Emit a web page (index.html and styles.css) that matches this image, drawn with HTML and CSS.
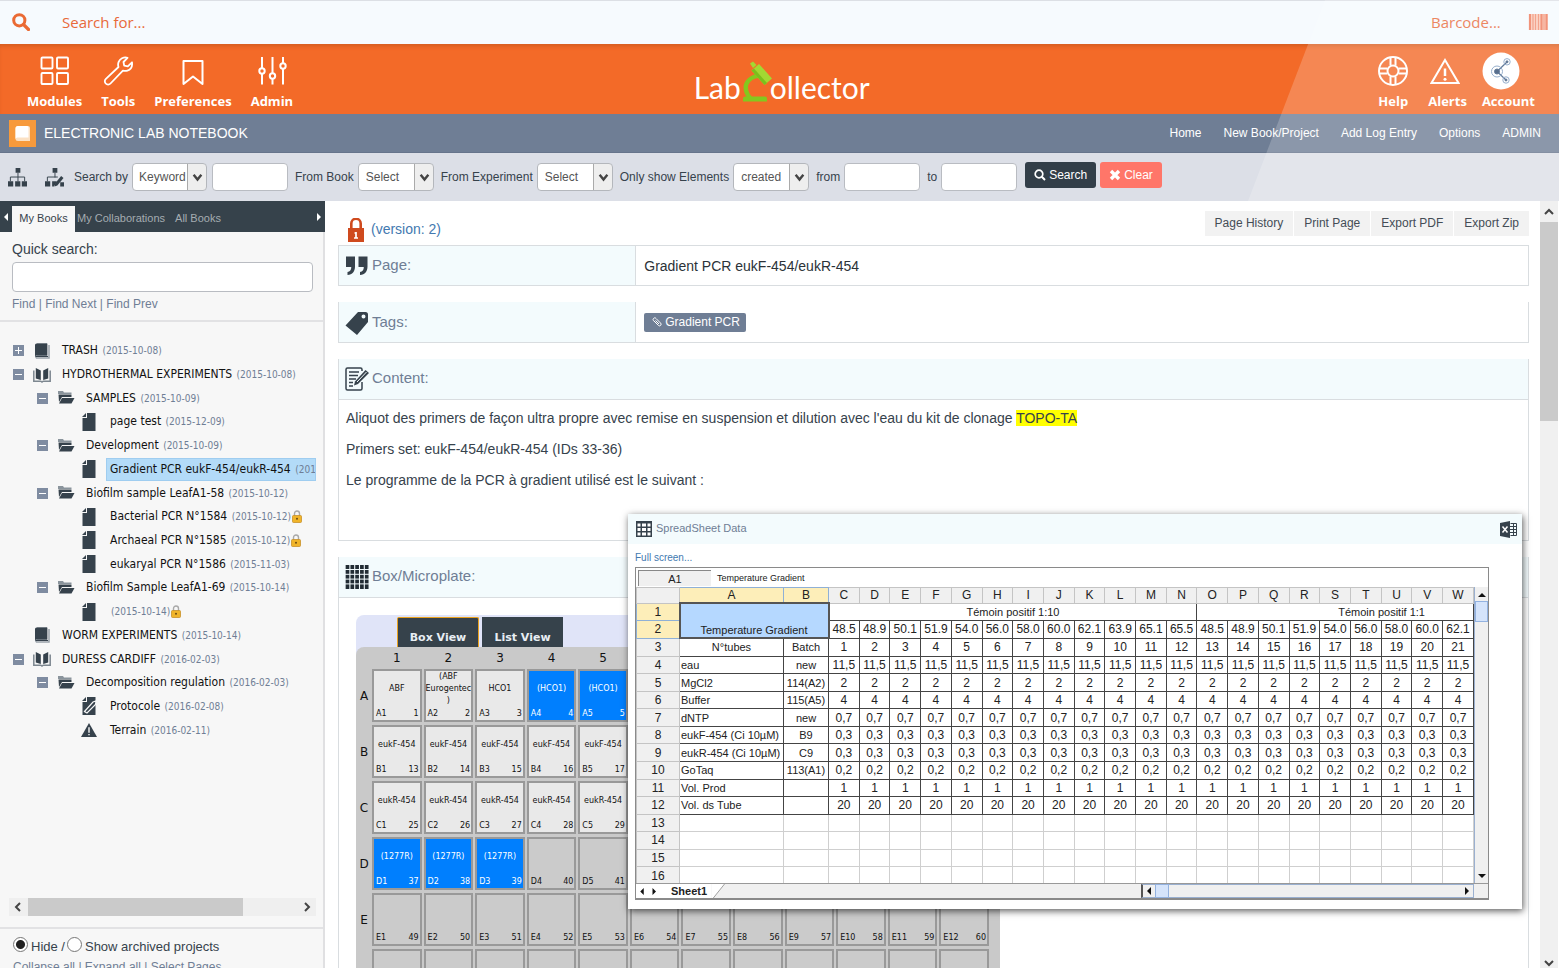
FILE: index.html
```html
<!DOCTYPE html>
<html lang="en">
<head>
<meta charset="utf-8">
<title>LabCollector - Electronic Lab Notebook</title>
<link rel="stylesheet" href="styles.css">
</head>
<body>
<svg class="defs" aria-hidden="true">
  <symbol id="i-book" viewBox="0 0 16 16"><path d="M3 0h9.500v12.500H2.500A1.500 1.500 0 0 0 2.500 15H15V2" fill="none" stroke="#9aa3ab" stroke-width="1.500"/><path d="M2.500 .5h10a.8.8 0 0 1 .8.800V12.500H3.500A2 2 0 0 0 1 14V2A1.500 1.500 0 0 1 2.500 .5z" fill="#36424c"/><path d="M1.500 13.500h12.500" stroke="#36424c"/></symbol>
  <symbol id="i-open" viewBox="0 0 18 16"><path d="M.8 3.500v10.700h7l1.200.8 1.200-.8h7V3.500" fill="none" stroke="#7d8790" stroke-width="1.500"/><path d="M2.800 1 7.800 3.500v9.500L2.800 11.500zM15.200 1 10.200 3.500v9.500l5-1.500z" fill="#36424c"/></symbol>
  <symbol id="i-folder" viewBox="0 0 18 14"><path d="M1 0h5l1 1.500h7.500V3H1z" fill="#8a949c"/><path d="M1.500 3.500h13V6H5L2 11z" fill="#36424c"/><path d="M5 7h12.500l-3 5.500H2z" fill="#36424c"/></symbol>
  <symbol id="i-page" viewBox="0 0 16 18"><path d="M6 0h8.500v18h-13V5H6z" fill="#36424c"/><path d="M1 4 5 0v4z" fill="#36424c"/></symbol>
  <symbol id="i-proto" viewBox="0 0 16 18"><path d="M6 0h8.500v18h-13V5H6z" fill="#36424c"/><path d="M1 4 5 0v4z" fill="#36424c"/><path d="M3.500 14.500 12 5l3-1-.5 3.500L6 16z" fill="#36424c" stroke="#f7f7f7" stroke-width="1.200"/></symbol>
  <symbol id="i-warn" viewBox="0 0 18 16"><path d="M9 0l9 16H0z" fill="#36424c"/><path d="M9 5v6M9 12.500v1.500" stroke="#f7f7f7" stroke-width="1.600"/></symbol>
  <symbol id="i-lock" viewBox="0 0 10 13"><path d="M2.500 6V3.500a2.500 2.500 0 0 1 5 0V6" fill="none" stroke="#a9a9a9" stroke-width="1.400"/><rect x=".5" y="5.500" width="9" height="7" rx="1" fill="#f0b429" stroke="#c8912a" stroke-width=".8"/><circle cx="5" cy="8.700" r="1" fill="#6b4a10"/></symbol>
  <symbol id="i-chev" viewBox="0 0 10 10"><path d="M1.500 2.500 5 6.800l3.500-4.300" fill="none" stroke="#444" stroke-width="2.200"/></symbol>
</svg>

<header class="top">
  <form class="searchbar">
    <svg class="ic-search" viewBox="0 0 18 18"><circle cx="7.300" cy="7.300" r="5.600" fill="none" stroke="#ea6a34" stroke-width="3"/><path d="M11.500 11.500 16.500 16.500" stroke="#ea6a34" stroke-width="3.200" stroke-linecap="round"/></svg>
    <input class="search-for" type="text" placeholder="Search for..." aria-label="Search for">
    <input class="barcode" type="text" placeholder="Barcode..." aria-label="Barcode">
    <svg class="ic-bar" viewBox="0 0 20 16"><path d="M1 0h19v16H1z" fill="#fbd0c0"/><path d="M2 0v16M13.500 0v16M18.500 0v16" stroke="#ee7a5a" stroke-width="2.200"/><path d="M5 0v16M7.500 0v16M10.500 0v16M16 0v16" stroke="#f08d70" stroke-width="1.300"/></svg>
  </form>

  <nav class="modules">
    <a href="#"><svg viewBox="0 0 30 30"><g fill="none" stroke="#fff" stroke-width="1.900"><rect x="1.500" y="1.500" width="11" height="11" rx="1"/><rect x="17" y="1.500" width="11" height="11" rx="1"/><rect x="1.500" y="17" width="11" height="11" rx="1"/><rect x="17" y="17" width="11" height="11" rx="1"/></g></svg>Modules</a>
    <a href="#"><svg viewBox="0 0 30 30"><path d="M19 2.200c2-.9 4.300-.9 5.500-.3L20.500 6l.7 3.700 3.600.6 4.200-4c.5 4-1 7.300-4.600 8.300-1.600.5-3.200.3-4.500 0L7.500 27.500a3.300 3.300 0 0 1-4.800 0 3.300 3.300 0 0 1 .2-4.700L15.500 11c-1.200-3.500.5-7.300 3.500-8.800z" fill="none" stroke="#fff" stroke-width="1.800" stroke-linejoin="round"/></svg>Tools</a>
    <a href="#"><svg viewBox="0 0 30 30"><path d="M5.500 5h19v23L15 20.500 5.500 28z" fill="none" stroke="#fff" stroke-width="2" stroke-linejoin="round"/></svg>Preferences</a>
    <a href="#"><svg viewBox="0 0 30 30"><g fill="none" stroke="#fff" stroke-width="2"><path d="M5 1v11M5 18v10.500M15.500 1v16M15.500 23v5.500M26 1v6M26 13v15.500"/><circle cx="5" cy="15" r="2.700"/><circle cx="15.500" cy="20" r="2.700"/><circle cx="26" cy="10" r="2.700"/></g></svg>Admin</a>
    <div class="logo"><span>Lab</span><svg viewBox="0 0 30 42"><path d="M17 12.500C7.500 13.500 1.500 20 1.500 26.500c0 4.500 2 8 4.500 11.500h6C8.500 34.500 6 31 6 26.500c0-4.500 4-9 11-9.500z" fill="#84c81e"/><path d="M1 37.500q0-2 2-2h20q2 0 2 2v3H1z" fill="#84c81e"/><path d="M9.500 9.500 17 3l13 14.500-7.500 6.500z" fill="#a3d832"/><path d="M9.500 9.500l2.500-2L25 22l-2.500 2z" fill="#7cbf1c"/><path d="M8 2.500 11 .5l3.500 3.500L11 7z" fill="#a3d832"/></svg><span>ollector</span></div>
    <div class="user">
      <a href="#"><svg viewBox="0 0 30 30"><g fill="none" stroke="#fff" stroke-width="2"><circle cx="15" cy="15" r="14"/><circle cx="15" cy="15" r="5.500"/><path d="M12.500 1.500v8M17.500 1.500v8M12.500 20.500v8M17.500 20.500v8M1.500 12.500h8M1.500 17.500h8M20.500 12.500h8M20.500 17.500h8"/></g></svg>Help</a>
      <a href="#" class="alerts"><svg viewBox="0 0 30 30"><path d="M15 4 28.500 27h-27z" fill="none" stroke="#fff" stroke-width="2"/><path d="M15 12.500v7.500" stroke="#fff" stroke-width="2.500"/><circle cx="15" cy="23.200" r="1.500" fill="#fff"/></svg>Alerts</a>
      <a href="#" class="account"><svg viewBox="0 0 38 38"><circle cx="19" cy="19" r="18.500" fill="#fff"/><g stroke="#3d5a80" fill="#2f4a70"><path d="M15 19.500 25 10M15 19.500 24 28" stroke-width="1.200"/><circle cx="15" cy="19.500" r="2.500"/><circle cx="25" cy="9.800" r="1"/><circle cx="24" cy="28" r="1"/></g><g fill="none" stroke="#7e9cc0"><circle cx="15" cy="19.500" r="5.500"/><circle cx="25" cy="9.800" r="3.200"/><circle cx="24" cy="28" r="3.200"/></g></svg>Account</a>
    </div>
  </nav>

  <div class="titlebar">
    <svg class="nb" viewBox="0 0 27 27"><rect width="27" height="27" fill="#f79a3c"/><path d="M9 6h10a2 2 0 0 1 2 2v13H9a2.500 2.500 0 0 1-2.500-2.500V8.500A2.500 2.500 0 0 1 9 6z" fill="#fbe1c4"/><path d="M9 6h9a1.500 1.500 0 0 1 1.500 1.500V17.500h-11a2 2 0 0 0-2 1.500V8.500A2.500 2.500 0 0 1 9 6z" fill="#fff"/></svg>
    <h1>ELECTRONIC LAB NOTEBOOK</h1>
    <nav><a href="#">Home</a><a href="#">New Book/Project</a><a href="#">Add Log Entry</a><a href="#">Options</a><a href="#">ADMIN</a></nav>
  </div>

  <form class="filters">
    <svg class="org" viewBox="0 0 20 20"><path d="M8 0h5v5H8zM0 14h5.500v5.500H0zM7.500 14H13v5.500H7.500zM14.500 14H20v5.500h-5.500z" fill="#36424c"/><path d="M10.500 5v9M2.500 14V9.500h15V14" fill="none" stroke="#36424c"/></svg>
    <svg class="org org2" viewBox="0 0 20 20"><path d="M8 0h5v5H8zM0 14h5.500v5.500H0zM7.500 14l5 0-3 5.500h-2z" fill="#36424c"/><path d="M10.500 5v5M2.500 14V9.500h11" fill="none" stroke="#36424c"/><path d="M10 19.500l.8-3.500L17 8.500l2.500 2L13 18.500z" fill="#36424c"/><path d="M16 15h4v4.500h-4z" fill="#36424c"/></svg>
    <label for="f-key">Search by</label>
    <span class="select"><select id="f-key"><option>Keyword</option></select><svg><use href="#i-chev"/></svg></span>
    <input class="box key" type="text" aria-label="Keyword value">
    <label for="f-book">From Book</label>
    <span class="select wide"><select id="f-book"><option>Select</option></select><svg><use href="#i-chev"/></svg></span>
    <label for="f-exp">From Experiment</label>
    <span class="select wide"><select id="f-exp"><option>Select</option></select><svg><use href="#i-chev"/></svg></span>
    <label for="f-el">Only show Elements</label>
    <span class="select wide"><select id="f-el"><option>created</option></select><svg><use href="#i-chev"/></svg></span>
    <label for="f-from">from</label>
    <input class="box from" id="f-from" type="text">
    <label for="f-to">to</label>
    <input class="box to" id="f-to" type="text">
    <button type="button" class="btn dark"><svg viewBox="0 0 12 12"><circle cx="5" cy="5" r="3.800" fill="none" stroke="#fff" stroke-width="1.700"/><path d="M7.800 7.800 11 11" stroke="#fff" stroke-width="2"/></svg>Search</button>
    <button type="button" class="btn red"><svg viewBox="0 0 12 12"><path d="M2 2l8 8M10 2l-8 8" stroke="#fff" stroke-width="3.400"/></svg>Clear</button>
  </form>
  <div class="shine"></div>
</header>

<div class="work">
  <aside class="side">
    <div class="tabs">
      <button class="arrow" aria-label="Previous tab"><svg viewBox="0 0 4 8"><path d="M4 0v8L0 4z" fill="#fff"/></svg></button>
      <button class="tab on">My Books</button>
      <button class="tab">My Collaborations</button>
      <button class="tab last">All Books</button>
      <button class="arrow end" aria-label="Next tab"><svg viewBox="0 0 4 8"><path d="M0 0v8l4-4z" fill="#fff"/></svg></button>
    </div>
    <div class="quick">
      <label for="quick">Quick search:</label>
      <input class="box" id="quick" type="text">
      <p><a href="#">Find</a> | <a href="#">Find Next</a> | <a href="#">Find Prev</a></p>
    </div>
    <div class="tree-area">
      <ul class="tree">
        <li><button class="tog plus" aria-label="Expand"></button><svg><use href="#i-book"/></svg><a href="#">TRASH <small>(2015-10-08)</small></a></li>
        <li><button class="tog" aria-label="Collapse"></button><svg><use href="#i-open"/></svg><a href="#">HYDROTHERMAL EXPERIMENTS <small>(2015-10-08)</small></a></li>
        <li class="l1"><button class="tog" aria-label="Collapse"></button><svg><use href="#i-folder"/></svg><a href="#">SAMPLES <small>(2015-10-09)</small></a></li>
        <li class="l2"><svg><use href="#i-page"/></svg><a href="#">page test <small>(2015-12-09)</small></a></li>
        <li class="l1"><button class="tog" aria-label="Collapse"></button><svg><use href="#i-folder"/></svg><a href="#">Development <small>(2015-10-09)</small></a></li>
        <li class="l2 sel"><svg><use href="#i-page"/></svg><a href="#">Gradient PCR eukF-454/eukR-454 <small>(201</small></a></li>
        <li class="l1"><button class="tog" aria-label="Collapse"></button><svg><use href="#i-folder"/></svg><a href="#">Biofilm sample LeafA1-58 <small>(2015-10-12)</small></a></li>
        <li class="l2"><svg><use href="#i-page"/></svg><a href="#">Bacterial PCR N°1584 <small>(2015-10-12)</small></a><svg class="lock"><use href="#i-lock"/></svg></li>
        <li class="l2"><svg><use href="#i-page"/></svg><a href="#">Archaeal PCR N°1585 <small>(2015-10-12)</small></a><svg class="lock"><use href="#i-lock"/></svg></li>
        <li class="l2"><svg><use href="#i-page"/></svg><a href="#">eukaryal PCR N°1586 <small>(2015-11-03)</small></a></li>
        <li class="l1"><button class="tog" aria-label="Collapse"></button><svg><use href="#i-folder"/></svg><a href="#">Biofilm Sample LeafA1-69 <small>(2015-10-14)</small></a></li>
        <li class="l2"><svg><use href="#i-page"/></svg><a href="#"><small>(2015-10-14)</small></a><svg class="lock"><use href="#i-lock"/></svg></li>
        <li><svg><use href="#i-book"/></svg><a href="#">WORM EXPERIMENTS <small>(2015-10-14)</small></a></li>
        <li><button class="tog" aria-label="Collapse"></button><svg><use href="#i-open"/></svg><a href="#">DURESS CARDIFF <small>(2016-02-03)</small></a></li>
        <li class="l1"><button class="tog" aria-label="Collapse"></button><svg><use href="#i-folder"/></svg><a href="#">Decomposition regulation <small>(2016-02-03)</small></a></li>
        <li class="l2"><svg><use href="#i-proto"/></svg><a href="#">Protocole <small>(2016-02-08)</small></a></li>
        <li class="l2"><svg><use href="#i-warn"/></svg><a href="#">Terrain <small>(2016-02-11)</small></a></li>
      </ul>
      <div class="hbar">
        <svg viewBox="0 0 10 10"><path d="M7 1 3 5l4 4" fill="none" stroke="#444" stroke-width="2"/></svg>
        <span class="track"><span class="thumb"></span></span>
        <svg viewBox="0 0 10 10"><path d="M3 1l4 4-4 4" fill="none" stroke="#444" stroke-width="2"/></svg>
      </div>
    </div>
    <div class="side-foot">
      <div class="radios"><input type="radio" name="arch" id="hide" checked><label for="hide">Hide /</label><input type="radio" name="arch" id="show"><label for="show">Show archived projects</label></div>
      <p><a href="#">Collapse all</a> | <a href="#">Expand all</a> | <a href="#">Select Pages</a></p>
    </div>
  </aside>

  <main class="main">
    <div class="doc">
      <div class="docbar">
        <svg class="redlock" viewBox="0 0 16 24"><path d="M3.300 11V5.500a4.700 4.700 0 0 1 9.400 0V11" fill="none" stroke="#cf4a1e" stroke-width="2.600"/><path d="M0 10h16v14H0z" fill="#cf4a1e"/><path d="M8 14v6M6.500 15h2M6 20h4" stroke="#fff" stroke-width="1.700"/></svg>
        <a class="version" href="#">(version: 2)</a>
        <div class="actions"><button>Page History</button><button>Print Page</button><button>Export PDF</button><button>Export Zip</button></div>
      </div>

      <section class="panel row first">
        <h2><svg viewBox="0 0 24 24"><path d="M1 2.500h9v10c0 5-2.500 8-7.500 8.500v-3c2.500-.5 3.800-2 3.800-5H1zM13.500 2.500h9v10c0 5-2.500 8-7.500 8.500v-3c2.500-.5 3.800-2 3.800-5h-5.300z" fill="#36424c"/></svg>Page:</h2>
        <div class="val">Gradient PCR eukF-454/eukR-454</div>
      </section>

      <section class="panel row">
        <h2><svg viewBox="0 0 24 24"><path fill-rule="evenodd" d="M13 1h7.500A2.500 2.500 0 0 1 23 3.500V11L12 24 .5 14.500zM18.500 3.500a2 2 0 1 0 .01 4 2 2 0 0 0-.01-4z" fill="#36424c"/></svg>Tags:</h2>
        <div class="val"><a class="tag" href="#"><svg viewBox="0 0 10 10"><path d="M1.500 1.500a1.500 1.500 0 0 1 2.500 0L8.500 6a1.500 1.500 0 0 1-2 2.500L2 4a1.500 1.500 0 0 1-.5-2.500zM3.500 3.500 7 7" fill="none" stroke="#fff"/></svg>Gradient PCR</a></div>
      </section>

      <section class="panel">
        <h2><svg viewBox="0 0 24 24"><path d="M17 15v6.500a1.500 1.500 0 0 1-1.500 1.500h-13A1.500 1.500 0 0 1 1 21.500v-19A1.500 1.500 0 0 1 2.500 1h13A1.500 1.500 0 0 1 17 2.500V4" fill="none" stroke="#36424c" stroke-width="1.500"/><path d="M4 5h10M4 8.500h9M4 12h7M4 15.500h4M4 19h4" stroke="#36424c" stroke-width="1.500"/><path d="M9 18.500 10 14.500 20.500 3l3.500 3L13 17z" fill="#36424c"/><path d="M12 15 21.500 5" stroke="#f3fbfd"/></svg>Content:</h2>
        <div class="text">
          <p>Aliquot des primers de façon ultra propre avec remise en suspension et dilution avec l'eau du kit de clonage <mark>TOPO-TA</mark></p>
          <p>Primers set: eukF-454/eukR-454 (IDs 33-36)</p>
          <p>Le programme de la PCR à gradient utilisé est le suivant :</p>
        </div>
      </section>

      <section class="panel">
        <h2><svg viewBox="0 0 24 24"><path d="M2.500 0v24M7.300 0v24M12.100 0v24M16.900 0v24M21.700 0v24" stroke="#222c34" stroke-width="3.700"/><path d="M0 4.500h24M0 9.300h24M0 14.100h24M0 18.900h24" stroke="#f3fbfd"/></svg>Box/Microplate:</h2>
        <div class="plate-wrap">
          <div class="plate-tabs"><button class="on">Box View</button><button>List View</button></div>
          <div class="plate"><table id="plate"></table></div>
        </div>
      </section>
    </div>

    <div class="vbar">
      <svg viewBox="0 0 10 10"><path d="M1 7l4-4 4 4" fill="none" stroke="#444" stroke-width="2"/></svg>
      <span class="track"><span class="thumb"></span></span>
      <svg viewBox="0 0 10 10"><path d="M1 3l4 4 4-4" fill="none" stroke="#444" stroke-width="2"/></svg>
    </div>

    <section class="popup">
      <header>
        <svg viewBox="0 0 16 16"><path d="M0 0h16v16H0z" fill="#36424c"/><path d="M1.500 2.500h3v3h-3zM6 2.500h4v3H6zM11.500 2.500h3v3h-3zM1.500 7h3v3h-3zM6 7h4v3H6zM11.500 7h3v3h-3zM1.500 11.500h3v3h-3zM6 11.500h4v3H6zM11.500 11.500h3v3h-3z" fill="#fff"/></svg>
        <h3>SpreadSheet Data</h3>
        <button aria-label="Export to Excel"><svg viewBox="0 0 17 17"><path d="M0 2 10 0v17L0 15z" fill="#36424c"/><path d="M10.500 2.500h6v12h-6M10 5.500h6M10 8.500h6M10 11.500h6M13.500 2.500v12" fill="none" stroke="#36424c"/><path d="M2.500 5.500l5 6M7.500 5.500l-5 6" stroke="#fff" stroke-width="1.500"/></svg></button>
      </header>
      <a class="full" href="#">Full screen...</a>
      <div class="sheet">
        <div class="fx"><span class="ref">A1</span><span class="formula">Temperature Gradient</span></div>
        <div class="grid">
          <div class="cells"><table id="sheet"></table></div>
          <div class="sv"><span class="up"></span><span class="knob"></span><span class="down"></span></div>
        </div>
        <div class="sheet-foot">
          <span class="nav"><svg viewBox="0 0 20 8"><path d="M4 0v8L0 4zM14 0v8l4-4z" fill="#111"/></svg></span>
          <button class="stab">Sheet1</button>
          <svg class="slant" viewBox="0 0 14 15"><path d="M0 0h14L2 15H0z" fill="#fff"/><path d="M14 0 2 15" stroke="#999"/></svg>
          <span class="fill"></span>
          <span class="sh"><svg viewBox="0 0 4 8"><path d="M4 0v8L0 4z" fill="#111"/></svg><span class="knob"></span><svg class="r" viewBox="0 0 4 8"><path d="M0 0v8l4-4z" fill="#111"/></svg></span>
        </div>
      </div>
    </section>
  </main>
</div>
<script src="app.js"></script>
</body>
</html>
```
FILE: styles.css
```css
* { box-sizing: border-box; }
html, body { height: 100%; }
body { margin: 0; display: flex; flex-direction: column; overflow: hidden; font: 14px/18px "Liberation Sans", Arial, sans-serif; color: #36424c; background: #fff; }
a { color: inherit; text-decoration: none; }
button, input, select { font: inherit; color: inherit; margin: 0; }
button { border: 0; padding: 0; background: none; cursor: pointer; }
h1, h2, h3, p, ul { margin: 0; padding: 0; font-weight: normal; }
.defs { position: absolute; width: 0; height: 0; }

/* top bars */
.top { position: relative; flex: none; }
.shine { position: absolute; top: 0; right: 0; bottom: 0; width: 311px; background: rgba(255,255,255,.2); clip-path: polygon(77px 0, 100% 0, 100% 100%, 0 100%); pointer-events: none; }
.searchbar { display: flex; align-items: center; height: 44px; padding: 0 11px 2px 12px; background: #f6fafe; border-top: 1px solid #dcdfe5; }
.searchbar input { border: 0; background: none; outline: 0; padding: 0; font: 15px/20px "Open Sans", sans-serif; }
.searchbar input::placeholder { color: #e8693a; opacity: 1; }
.ic-search { width: 18px; height: 18px; }
.search-for { flex: 1; margin-left: 32px; }
.barcode { width: 97px; }
.ic-bar { width: 20px; height: 16px; }
.modules { display: flex; gap: 19px; height: 70px; padding: 8px 24px 0 27px; background: #f36a28; color: #fff; box-shadow: inset 0 4px 4px -2px rgba(160,70,20,.4); font: bold 13px/18px "Open Sans", sans-serif; }
.modules a { display: flex; flex-direction: column; align-items: center; gap: 3px; }
.modules a svg { width: 30px; height: 30px; margin: 4px 0 3px; }
.modules .account svg { width: 38px; height: 38px; margin: 0 15px -1px 0; }
.modules .alerts svg { margin-right: 6px; }
.logo { flex: 1; display: flex; justify-content: center; align-items: flex-start; padding: 8px 108px 0 0; font: 30px/54px Lato, sans-serif; }
.logo svg { width: 30px; height: 42px; margin: 1px -2px 0 1px; }
.user { display: flex; gap: 15px; }
.user a:first-child { margin-right: 5px; }
.titlebar { display: flex; align-items: center; height: 39px; padding: 0 18px 0 9px; background: #6f7e95; border-bottom: 1px solid #66748b; color: #fff; }
.titlebar h1 { font-size: 14px; line-height: 18px; }
.nb { width: 27px; height: 27px; margin-right: 8px; }
.titlebar nav { display: flex; gap: 22px; margin-left: auto; font-size: 12px; }

.filters { display: flex; align-items: center; height: 48px; padding: 0 8px; background: #dcdfe7; font-size: 12px; }
.filters label { margin: 0 4px 0 7px; white-space: nowrap; }
.org { width: 19px; height: 19px; }
.org2 { margin: 0 3px 0 18px; }
.box { height: 28px; border: 1px solid #b9bcc2; border-radius: 4px; background: #fff; padding: 0 6px; outline: 0; }
.filters .box { width: 76px; }
.key { margin-left: 5px; }
.filters .to { margin-right: 8px; }
.select { position: relative; display: flex; width: 75px; }
.select.wide { width: 76px; }
.select select { appearance: none; width: 100%; height: 28px; padding: 0 20px 0 6px; border: 1px solid #b4b7bc; border-radius: 4px; background: linear-gradient(90deg, #aaa 1px, #eee 1px) right / 19px 100% no-repeat #fff; outline: 0; color: #555; }
.select svg { position: absolute; right: 4px; top: 9px; width: 11px; height: 11px; pointer-events: none; }
.select.wide select { padding-left: 7px; }
.btn { display: flex; align-items: center; gap: 3px; height: 26px; margin-top: -5px; padding: 0 9px; border-radius: 3px; color: #fff; }
.btn svg { width: 12px; height: 12px; }
.dark { background: #323e48; margin-right: 4px; }
.red { background: #ff7669; }

/* sidebar */
.work { flex: 1; min-height: 0; display: flex; }
.side { flex: none; width: 325px; display: flex; flex-direction: column; background: #f7f7f7; border-right: 2px solid #e0e0e2; }
.tabs { display: flex; align-items: flex-end; height: 31px; margin-right: -2px; background: #36424b; color: #a5acb1; font-size: 11px; }
.tab { height: 26px; padding: 0 2px 2px; white-space: nowrap; }
.tab.on { width: 63px; background: #f7f7f7; color: #36424b; }
.tab.last { margin-left: 6px; }
.arrow { display: flex; align-items: center; justify-content: center; width: 12px; height: 31px; }
.arrow svg { width: 4px; height: 8px; }
.arrow.end { margin-left: auto; }
.quick { height: 90px; padding: 8px 10px 0 12px; border-bottom: 2px solid #e2e2e4; }
.quick label { display: block; }
.quick .box { display: block; width: 100%; height: 30px; margin: 4px 0 3px; }
.quick p, .side-foot p { font-size: 12px; color: #6f7e95; }
.tree-area { flex: 1; min-height: 0; display: flex; flex-direction: column; justify-content: space-between; padding: 17px 7px 11px 9px; overflow: hidden; }
.tree { list-style: none; display: grid; grid-auto-rows: 1fr; height: 403px; overflow: hidden; font: 12px/22px "DejaVu Sans Condensed", "DejaVu Sans", sans-serif; color: #111; }
.tree li { position: relative; display: grid; grid-template-columns: 20px 25px auto 1fr; align-items: center; padding-left: 4px; white-space: nowrap; }
.tree .l1 { padding-left: 28px; }
.tree .l2 { padding-left: 52px; }
.tree svg { grid-column: 2; width: 18px; height: 16px; }
.tree .l2 svg { height: 18px; width: 16px; }
.tree a { grid-column: 3; padding: 0 4px; }
.tree .sel { grid-template-columns: 20px 25px 1fr; }
.tree .sel a { background: #b3dbf8; outline: 1px solid #9fcdf0; outline-offset: -1px; padding-right: 0; }
.tree small { margin-left: 1px; font-size: 10px; color: #6f7e95; }
.tree li .lock { grid-column: 4; width: 10px; height: 13px; margin-left: -3px; }
.tog { width: 11px; height: 11px; background: linear-gradient(#fff, #fff) center / 7px 1px no-repeat #7f8ca1; }
.tog.plus { background: linear-gradient(#fff, #fff) center / 7px 1px no-repeat, linear-gradient(#fff, #fff) center / 1px 7px no-repeat #7f8ca1; }
.hbar { display: flex; align-items: center; gap: 5px; height: 18px; padding: 0 4px; background: #efefef; }
.hbar svg, .vbar svg { flex: none; width: 10px; height: 10px; }
.hbar .track { flex: 1; height: 18px; }
.hbar .thumb { display: block; width: 80%; height: 100%; background: #cacaca; }
.side-foot { height: 41px; padding: 7px 13px 0; border-top: 2px solid #e2e2e4; overflow: hidden; }
.radios { display: flex; align-items: center; font-size: 13px; line-height: 22px; }
.radios input { appearance: none; width: 15px; height: 15px; margin-bottom: 5px; border: 1px solid #777; border-radius: 50%; background: #fff; }
.radios input:checked { background: radial-gradient(circle, #222 0 4px, #fff 5px); }
.radios label { margin: 0 2px 0 3px; }

/* document */
.main { position: relative; flex: 1; min-width: 0; display: flex; overflow: hidden; }
.doc { flex: 1; min-width: 0; padding: 0 11px 0 13px; overflow: hidden; }
.docbar { display: flex; align-items: center; height: 44px; padding: 12px 0 0 10px; }
.redlock { width: 16px; height: 24px; margin: 1px 7px 0 0; }
.version { color: #4379b0; }
.actions { display: flex; gap: 1px; margin: -12px 0 0 auto; font-size: 12px; }
.actions button { height: 25px; padding: 0 10px; background: #f2f2f2; color: #444d56; }
.panel { margin-bottom: 16px; border: 1px solid #d9dde0; border-top: 0; }
.panel.first { border-top: 1px solid #d9dde0; }
.panel h2 { display: flex; align-items: center; height: 41px; padding: 0 0 3px 6px; gap: 3px; background: #f3fbfd; border-bottom: 1px solid #d9dde0; color: #6f7e95; font-size: 15px; }
.panel h2 svg { width: 24px; height: 24px; margin-top: 3px; }
.row { display: grid; grid-template-columns: 1fr 3fr; }
.panel.row h2 { height: 40px; padding-bottom: 1px; border-bottom: 0; border-right: 1px solid #d9dde0; }
.panel.row.first h2 { height: 39px; }
.panel.row h2 svg { margin-top: 2px; }
.val { display: flex; align-items: center; padding-left: 8px; color: #2b3238; }
.tag { display: flex; align-items: center; gap: 3px; height: 19px; padding: 0 6px 0 8px; border-radius: 2px; background: #6f7e95; color: #fff; font-size: 12px; }
.tag svg { width: 10px; height: 10px; }
.text { height: 140px; padding: 9px 7px; }
.text p { margin-bottom: 13px; }
mark { background: #ff0; color: inherit; }

.plate-wrap { width: 644px; margin: 17px 0 0 17px; background: #e0e4f8; border-radius: 8px 8px 0 0; font-family: "DejaVu Sans", sans-serif; }
.plate-tabs { display: flex; gap: 3px; padding: 2px 0 0 41px; }
.plate-tabs button { height: 30px; width: 81px; padding-top: 10px; background: #36424b; color: #e8eef4; font-size: 11px; font-weight: bold; border: 1px solid #36424b; border-bottom: 0; }
.plate-tabs button.on { width: 82px; border-color: #eaa21f; border-radius: 2px 2px 0 0; }
.plate { padding: 0 9px 0 0; background: #c9c9c9; border-radius: 8px 0 0 0; color: #111; }
.plate table { width: 100%; table-layout: fixed; border-collapse: separate; border-spacing: 2px 3px; font-size: 8px; line-height: 12px; }
.plate th { padding: 0; font-size: 12px; font-weight: normal; }
.plate thead th { height: 16px; }
.plate thead th:first-child { width: 12px; }
.plate td { height: 53px; padding: 0; border: 2px solid #999; background: #cbcbcb; }
.plate td.has { background: #e9e9e9; }
.plate td.blue { background: #007ffe; color: #fff; }
.plate .well { display: flex; flex-direction: column; height: 49px; }
.plate .name { flex: 1; display: flex; align-items: center; justify-content: center; text-align: center; white-space: pre; }
.plate .pos { display: flex; justify-content: space-between; padding: 0 1px 0 2px; line-height: 13px; }

.vbar { flex: none; display: flex; flex-direction: column; align-items: center; gap: 5px; width: 18px; margin-right: 1px; padding: 6px 0 0; background: #f0f0f0; }
.vbar .track { flex: 1; width: 100%; }
.vbar .thumb { display: block; height: 199px; background: #cacaca; }

/* spreadsheet window */
.popup { position: absolute; top: 313px; left: 303px; right: 37px; padding-bottom: 9px; background: #fff; box-shadow: 1px 2px 7px rgba(0,0,0,.65); }
.popup header { display: flex; align-items: center; height: 30px; padding: 0 5px 0 8px; background: #f3fbfd; }
.popup header > svg { width: 16px; height: 16px; }
.popup h3 { margin: 0 auto 2px 4px; font-size: 11px; color: #6f7e95; }
.popup header button svg { display: block; width: 17px; height: 17px; }
.full { display: block; margin: 5px 7px 0; font-size: 10px; color: #4379b0; }
.sheet { margin: 0 33px 0 7px; border: 1px solid #8a8a8a; border-bottom-width: 2px; background: #f0f0f0; color: #222; font-size: 11px; }
.fx { display: flex; align-items: center; gap: 4px; height: 19px; padding: 2px; background: #fff; font-size: 9px; line-height: 12px; }
.ref { width: 73px; height: 16px; border: 1px solid #888; border-width: 1px 0 0 1px; background: #f0f0f0; text-align: center; font-size: 11px; line-height: 16px; }
.formula { margin-left: 2px; }
.grid { display: flex; height: 296px; }
.cells { flex: 1; overflow: hidden; }
.cells table { width: 100%; height: 298px; table-layout: fixed; border-collapse: collapse; background: #fff; line-height: 14px; }
.cells th, .cells td { padding: 0; border: 1px solid #cfcfcf; text-align: center; white-space: nowrap; overflow: hidden; font-weight: normal; }
.cells th { background: #f0f0f0; border-color: #c4c4c4; font-size: 12px; }
.cells th.on { background: #fdeeb9; border-color: #8fb0d6; }
.cells td.d { border-color: #444; }
.cells td.n { font-size: 12px; }
.cells td.l { text-align: left; padding-left: 1px; }
.cells td.off { text-align: right; padding-right: 48px; }
.cells td.cur { background: #b5d8ff; border: 2px solid #555; vertical-align: bottom; }
.c-head { width: 43px; }
.c-a { width: 104px; }
.c-b { width: 45px; }
.sv { display: flex; flex-direction: column; align-items: center; width: 14px; border-left: 1px solid #9ab0d0; }
.sv .up, .sv .down { border: 4px solid transparent; }
.sv .up { border-bottom-color: #111; border-top: 0; margin: 6px 0 4px; }
.sv .down { border-top-color: #111; border-bottom: 0; margin: auto 0 5px; }
.sv .knob { width: 13px; height: 21px; border: 1px solid #93b2e0; background: #d5e4fb; }
.sheet-foot { display: flex; height: 15px; border-top: 1px solid #999; }
.nav { display: flex; align-items: center; padding: 0 8px 0 4px; width: 31px; background: #fff; }
.nav svg { width: 18px; height: 7px; }
.stab { padding: 0 4px; background: #fff; font-weight: bold; font-size: 11px; line-height: 13px; }
.slant { width: 14px; height: 14px; }
.fill { flex: 1; }
.sh { display: flex; align-items: center; gap: 4px; width: 333px; margin-right: 14px; padding: 0 4px; border: 1px solid #9ab0d0; border-left: 2px solid #555; }
.sh svg { width: 4px; height: 8px; }
.sh .knob { width: 14px; height: 14px; border: 1px solid #93b2e0; background: #d5e4fb; }
.sh .r { margin-left: auto; }
```
FILE: app.js
```js
// Microplate: named wells by row; a leading * marks a highlighted well
const wells = {
  A: ['ABF', '(ABF\nEurogentec\n)', 'HCO1', '*(HCO1)', '*(HCO1)'],
  B: Array(5).fill('eukF-454'),
  C: Array(5).fill('eukR-454'),
  D: ['*(1277R)', '*(1277R)', '*(1277R)']
};
// Number of wells that carry a position label in each row
const labelled = { A: 5, B: 5, C: 5, D: 5, E: 12, F: 0 };
let html = '<thead><tr><th></th>';
for (let c = 1; c <= 12; c++) html += `<th scope="col">${c <= 5 ? c : ''}</th>`;
html += '</tr></thead><tbody>';
[...'ABCDEF'].forEach((r, i) => {
  html += `<tr><th scope="row">${labelled[r] ? r : ''}</th>`;
  for (let c = 1; c <= 12; c++) {
    let name = (wells[r] || [])[c - 1] || '';
    const blue = name.startsWith('*');
    if (blue) name = name.slice(1);
    const cls = blue ? 'blue' : name ? 'has' : '';
    const pos = c <= labelled[r] ? `<span>${r}${c}</span><span>${i * 12 + c}</span>` : '';
    html += `<td class="${cls}"><div class="well"><span class="name">${name}</span><span class="pos">${pos}</span></div></td>`;
  }
  html += '</tr>';
});
document.getElementById('plate').innerHTML = html + '</tbody>';

// Spreadsheet: columns A to W, rows 1 to 16
const temps = ['48.5', '48.9', '50.1', '51.9', '54.0', '56.0', '58.0', '60.0', '62.1', '63.9', '65.1', '65.5'];
const rows = [
  ['N°tubes', 'Batch', null], ['eau', 'new', '11,5'], ['MgCl2', '114(A2)', '2'], ['Buffer', '115(A5)', '4'],
  ['dNTP', 'new', '0,7'], ['eukF-454 (Ci 10µM)', 'B9', '0,3'], ['eukR-454 (Ci 10µM)', 'C9', '0,3'],
  ['GoTaq', '113(A1)', '0,2'], ['Vol. Prod', '', '1'], ['Vol. ds Tube', '', '20']
];
let s = '<colgroup><col class="c-head"><col class="c-a"><col class="c-b"><col span="21"></colgroup><thead><tr><th></th>';
[...'ABCDEFGHIJKLMNOPQRSTUVW'].forEach(l => { s += `<th scope="col" class="${l < 'C' ? 'on' : ''}">${l}</th>`; });
s += '</tr></thead><tbody><tr><th scope="row" class="on">1</th><td class="cur" colspan="2" rowspan="2">Temperature Gradient</td><td class="d" colspan="12">Témoin positif 1:10</td><td class="d off" colspan="9">Témoin positif 1:1</td></tr><tr><th scope="row" class="on">2</th>';
for (let c = 0; c < 21; c++) s += `<td class="d n">${temps[c % 12]}</td>`;
s += '</tr>';
rows.forEach(([a, b, v], i) => {
  s += `<tr><th scope="row">${i + 3}</th><td class="d ${i ? 'l' : ''}">${a}</td><td class="d">${b}</td>`;
  for (let c = 1; c <= 21; c++) s += `<td class="d n">${v === null ? c : v}</td>`;
  s += '</tr>';
});
for (let r = 13; r <= 16; r++) s += `<tr><th scope="row">${r}</th>${'<td></td>'.repeat(23)}</tr>`;
document.getElementById('sheet').innerHTML = s + '</tbody>';
```
